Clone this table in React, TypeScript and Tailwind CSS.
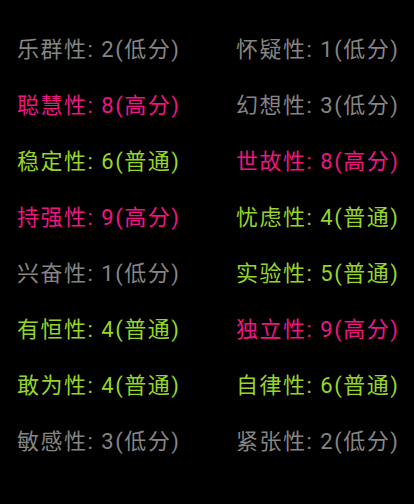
import React from 'react';

type Level = 'low' | 'normal' | 'high';

const levelLabel: Record<Level, string> = {
    low: '低分',
    normal: '普通',
    high: '高分',
};

const levelColor: Record<Level, string> = {
    low: 'text-[#858585]',
    normal: 'text-[#96d62a]',
    high: 'text-[#ee1683]',
};

const traits: { name: string; score: number; level: Level }[] = [
    { name: '乐群性', score: 2, level: 'low' },
    { name: '怀疑性', score: 1, level: 'low' },
    { name: '聪慧性', score: 8, level: 'high' },
    { name: '幻想性', score: 3, level: 'low' },
    { name: '稳定性', score: 6, level: 'normal' },
    { name: '世故性', score: 8, level: 'high' },
    { name: '持强性', score: 9, level: 'high' },
    { name: '忧虑性', score: 4, level: 'normal' },
    { name: '兴奋性', score: 1, level: 'low' },
    { name: '实验性', score: 5, level: 'normal' },
    { name: '有恒性', score: 4, level: 'normal' },
    { name: '独立性', score: 9, level: 'high' },
    { name: '敢为性', score: 4, level: 'normal' },
    { name: '自律性', score: 6, level: 'normal' },
    { name: '敏感性', score: 3, level: 'low' },
    { name: '紧张性', score: 2, level: 'low' },
];

const App: React.FC = () => {
    return (
        <div
            className="w-[414px] h-[504px] bg-black overflow-hidden"
            style={{ fontFamily: 'Roboto, "Noto Sans CJK SC", sans-serif' }}
        >
            <div className="grid grid-cols-[219px_1fr] pl-[17px] pt-[21px]">
                {traits.map((t) => (
                    <div
                        key={t.name}
                        className={`h-14 flex items-center text-[22px] tracking-[1.5px] whitespace-nowrap ${levelColor[t.level]}`}
                    >
                        {t.name}: {t.score}({levelLabel[t.level]})
                    </div>
                ))}
            </div>
        </div>
    );
};

export default App;
